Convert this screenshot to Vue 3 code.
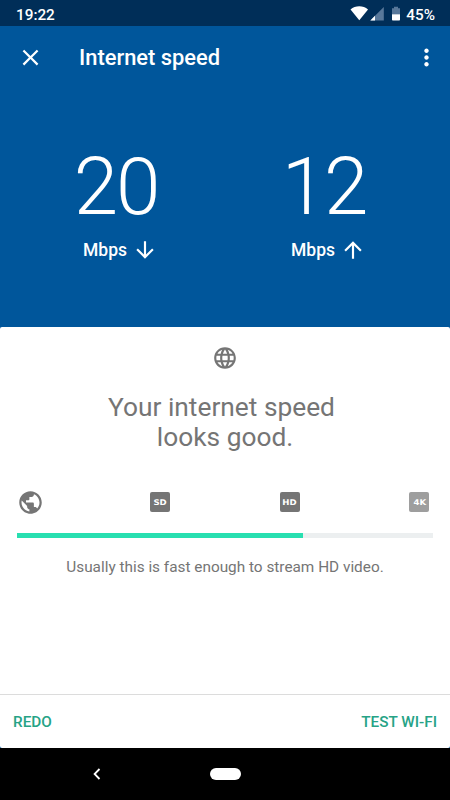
<script setup>
const speeds = [
  { value: 20, dir: 'down', path: 'M20 12l-1.41-1.41L13 16.17V4h-2v12.17l-5.58-5.59L4 12l8 8 8-8z' },
  { value: 12, dir: 'up', path: 'M4 12l1.41 1.41L11 7.83V20h2V7.83l5.58 5.59L20 12l-8-8-8 8z' },
]
const badges = [
  { label: 'SD', dim: false },
  { label: 'HD', dim: false },
  { label: '4K', dim: true },
]
const progress = 68.8
</script>

<template>
  <div class="screen">
    <div class="status">
      <span class="clock">19:22</span>
      <svg class="signals" width="51" height="16" viewBox="0 0 51 16">
        <path d="M0.5 3.6C5.3-.8 13.2-.8 18 3.6L9.3 14.2z" fill="#fff" />
        <path d="M33.8 1v13.5H20.3z" fill="#58789a" />
        <path d="M25 9.8v4.7h-4.7z" fill="#fff" />
        <path d="M44 .7h4v1.6h2v6h-8v-6h2z" fill="#58789a" />
        <path d="M42 8.3h8v5.5q0 .8-.8.8h-6.4q-.8 0-.8-.8z" fill="#fff" />
      </svg>
      <span class="percent">45%</span>
    </div>

    <header class="bar">
      <svg class="close" viewBox="0 0 24 24"><path fill="#fff" d="M19 6.41L17.59 5 12 10.59 6.41 5 5 6.41 10.59 12 5 17.59 6.41 19 12 13.41 17.59 19 19 17.59 13.41 12z" /></svg>
      <h1>Internet speed</h1>
      <svg class="more" viewBox="0 0 24 24"><path fill="#fff" d="M12 8c1.1 0 2-.9 2-2s-.9-2-2-2-2 .9-2 2 .9 2 2 2zm0 2c-1.1 0-2 .9-2 2s.9 2 2 2 2-.9 2-2-.9-2-2-2zm0 6c-1.1 0-2 .9-2 2s.9 2 2 2 2-.9 2-2-.9-2-2-2z" /></svg>
    </header>

    <section class="speeds">
      <div v-for="s in speeds" :key="s.dir" class="speed">
        <div class="value">{{ s.value }}</div>
        <div class="unit">
          <span>Mbps</span>
          <svg viewBox="0 0 24 24"><path fill="#fff" :d="s.path" /></svg>
        </div>
      </div>
    </section>

    <main class="card">
      <svg class="globe" viewBox="0 0 24 24"><path fill="#757575" d="M11.99 2C6.47 2 2 6.48 2 12s4.47 10 9.99 10C17.52 22 22 17.52 22 12S17.52 2 11.99 2zm6.93 6h-2.95c-.32-1.25-.78-2.45-1.38-3.56 1.84.63 3.37 1.91 4.33 3.56zM12 4.04c.83 1.2 1.48 2.53 1.91 3.96h-3.82c.43-1.43 1.08-2.76 1.91-3.96zM4.26 14C4.1 13.36 4 12.69 4 12s.1-1.36.26-2h3.38c-.08.66-.14 1.32-.14 2s.06 1.34.14 2H4.26zm.82 2h2.95c.32 1.25.78 2.45 1.38 3.56-1.84-.63-3.37-1.9-4.33-3.56zm2.95-8H5.08c.96-1.66 2.49-2.93 4.33-3.56C8.81 5.55 8.35 6.75 8.03 8zM12 19.96c-.83-1.2-1.48-2.53-1.91-3.96h3.82c-.43 1.43-1.08 2.76-1.91 3.96zM14.34 14H9.66c-.09-.66-.16-1.32-.16-2s.07-1.35.16-2h4.68c.09.65.16 1.32.16 2s-.07 1.34-.16 2zm.25 5.56c.6-1.11 1.06-2.31 1.38-3.56h2.95c-.96 1.65-2.49 2.93-4.33 3.56zM16.36 14c.08-.66.14-1.32.14-2s-.06-1.34-.14-2h3.38c.16.64.26 1.31.26 2s-.1 1.36-.26 2h-3.38z" /></svg>
      <h2><span>Your internet speed</span><span>looks good.</span></h2>
      <div class="levels">
        <svg class="earth" viewBox="0 0 24 24"><path fill="#757575" d="M12 2C6.48 2 2 6.48 2 12s4.48 10 10 10 10-4.48 10-10S17.52 2 12 2zm-1 17.93c-3.95-.49-7-3.85-7-7.93 0-.62.08-1.21.21-1.79L9 15v1c0 1.1.9 2 2 2v1.93zm6.9-2.54c-.26-.81-1-1.39-1.9-1.39h-1v-3c0-.55-.45-1-1-1H8v-2h2c.55 0 1-.45 1-1V7h2c1.1 0 2-.9 2-2v-.41c2.93 1.19 5 4.06 5 7.41 0 2.08-.8 3.97-2.1 5.39z" /></svg>
        <span v-for="b in badges" :key="b.label" class="badge" :class="{ dim: b.dim }"><b>{{ b.label }}</b></span>
      </div>
      <div class="track"><div class="fill" :style="{ width: progress + '%' }"></div></div>
      <p>Usually this is fast enough to stream HD video.</p>
      <footer>
        <button>REDO</button>
        <button>TEST WI-FI</button>
      </footer>
    </main>

    <nav>
      <svg class="back" viewBox="0 0 8 12"><path d="M6.5 1L1.6 6l4.9 5" fill="none" stroke="#fff" stroke-width="1.8" /></svg>
      <span class="home"></span>
    </nav>
  </div>
</template>

<style>
body {
  margin: 0;
  background: #000;
}
</style>

<style scoped>
.screen {
  width: 450px;
  height: 800px;
  box-sizing: border-box;
  display: flex;
  flex-direction: column;
  overflow: hidden;
  background: #00569b;
  font-family: Roboto, sans-serif;
  color: #fff;
}
svg {
  display: block;
  flex: none;
}
.status {
  height: 26px;
  flex: none;
  display: flex;
  align-items: center;
  box-sizing: border-box;
  padding: 3px 15px 0 16px;
  background: #002e58;
  font-size: 15.3px;
  font-weight: 500;
  line-height: 24px;
}
.signals {
  margin: 0 5px 2px auto;
}
.bar {
  height: 64px;
  flex: none;
  display: flex;
  align-items: center;
  padding: 0 10.5px 0 17px;
}
.close {
  width: 27px;
  height: 27px;
  margin-top: -2px;
}
h1 {
  margin: 0 auto 0 35px;
  font-size: 21.9px;
  font-weight: 500;
  line-height: 64px;
}
.more {
  width: 27px;
  height: 27px;
  margin-top: -2px;
}
.speeds {
  height: 237px;
  flex: none;
  display: grid;
  grid-template-columns: 208px 208px;
  padding: 51px 16px 0 14px;
  box-sizing: border-box;
}
.speed {
  display: flex;
  flex-direction: column;
  align-items: center;
}
.value {
  font-size: 80px;
  font-weight: 300;
  line-height: 92px;
  letter-spacing: -2px;
  padding-right: 4px;
}
.unit {
  display: flex;
  align-items: center;
  gap: 5px;
  margin: 4px 0 0 5px;
  font-size: 17.5px;
  font-weight: 500;
  line-height: 26px;
}
.unit svg {
  width: 26px;
  height: 26px;
  margin-top: -1px;
}
.card {
  height: 421px;
  flex: none;
  display: flex;
  flex-direction: column;
  box-sizing: border-box;
  padding-top: 18px;
  background: #fff;
  border-radius: 2px;
  color: #757575;
}
.globe {
  width: 26px;
  height: 26px;
  align-self: center;
}
h2 {
  display: flex;
  flex-direction: column;
  align-items: center;
  margin: 21px 0 0;
  font-size: 26.3px;
  font-weight: 400;
  line-height: 30px;
}
h2 span:first-child {
  margin-right: 7px;
}
.levels {
  display: flex;
  justify-content: space-between;
  align-items: center;
  height: 26px;
  margin-top: 37px;
  padding: 0 20.5px;
}
.earth {
  width: 27px;
  height: 27px;
  margin: 0 -3.5px;
}
.badge {
  width: 20px;
  height: 20px;
  border-radius: 2px;
  background: #757575;
  color: #fff;
  font: bold 7.8px/21px "DejaVu Sans", sans-serif;
  display: flex;
  justify-content: center;
}
.badge b {
  transform: scaleX(1.1);
}
.badge.dim {
  background: #9e9e9e;
}
.track {
  height: 5px;
  margin: 18px 17px 0;
  background: #eceff0;
}
.fill {
  height: 5px;
  background: #28dfb0;
}
p {
  margin: 19px 0 0;
  font-size: 15.35px;
  line-height: 20px;
  text-align: center;
}
footer {
  height: 54px;
  margin-top: auto;
  display: flex;
  justify-content: space-between;
  align-items: center;
  box-sizing: border-box;
  border-top: 1px solid #dcdcdc;
  padding: 0 13px;
}
button {
  padding: 0;
  border: 0;
  background: none;
  color: #26a386;
  font: 500 15.3px/20px Roboto, sans-serif;
}
nav {
  flex: 1;
  display: grid;
  grid-template-columns: 1fr 31px 1fr;
  align-items: center;
  background: #000;
}
.back {
  width: 8px;
  height: 12px;
  margin-left: 93px;
}
.home {
  height: 12px;
  border-radius: 6px;
  background: #fff;
}
</style>
